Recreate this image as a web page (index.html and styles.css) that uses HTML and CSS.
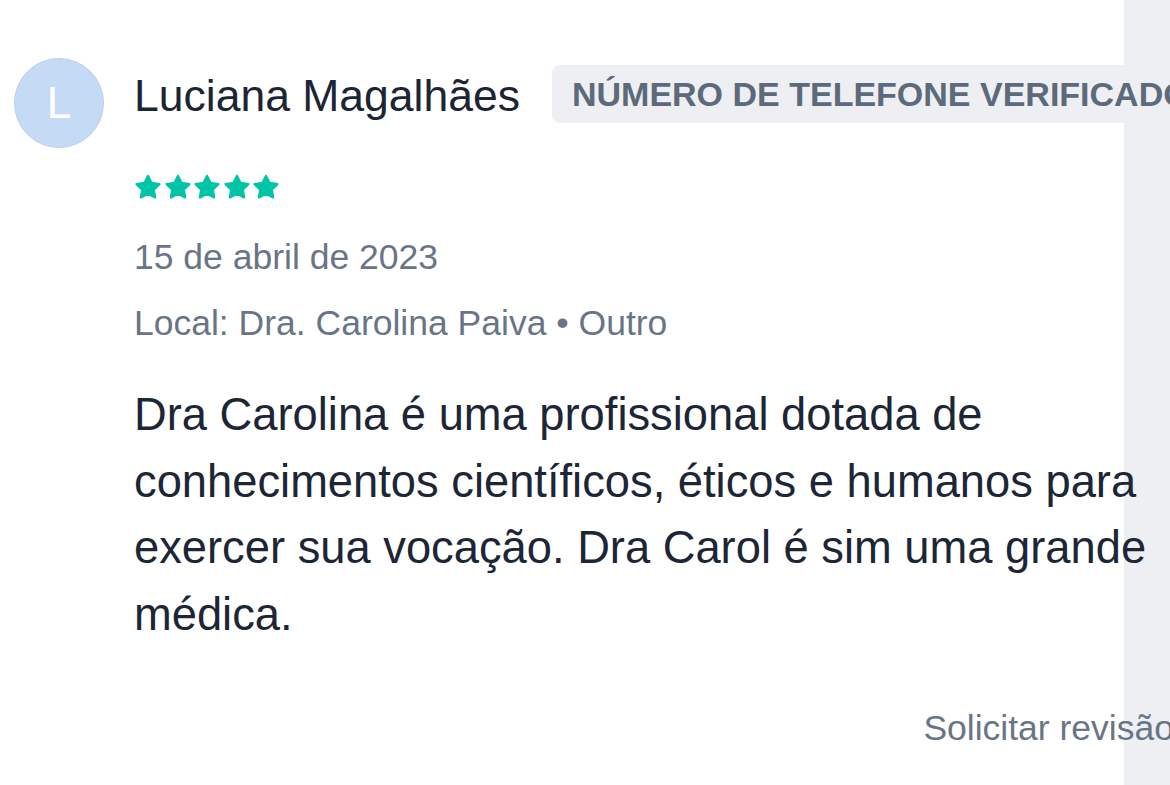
FILE: index.html
```html
<!DOCTYPE html>
<html lang="pt-BR">
<head>
    <meta charset="UTF-8">
    <meta name="viewport" content="width=device-width, initial-scale=1.0">
    <title>Opinião - Luciana Magalhães</title>
    <link rel="stylesheet" href="styles.css">
</head>
<body>
    <div class="review">
        <div class="review__avatar">L</div>
        <div class="review__content">
            <div class="review__head">
                <span class="review__name">Luciana Magalhães</span>
                <span class="review__badge">NÚMERO DE TELEFONE VERIFICADO</span>
            </div>
            <div class="review__stars">
                <svg class="star" viewBox="0 0 24 24"><polygon points="12,2.5 15.09,8.56 21.8,9.5 16.9,14.2 18.1,20.9 12,17.7 5.9,20.9 7.1,14.2 2.2,9.5 8.91,8.56"/></svg>
                <svg class="star" viewBox="0 0 24 24"><polygon points="12,2.5 15.09,8.56 21.8,9.5 16.9,14.2 18.1,20.9 12,17.7 5.9,20.9 7.1,14.2 2.2,9.5 8.91,8.56"/></svg>
                <svg class="star" viewBox="0 0 24 24"><polygon points="12,2.5 15.09,8.56 21.8,9.5 16.9,14.2 18.1,20.9 12,17.7 5.9,20.9 7.1,14.2 2.2,9.5 8.91,8.56"/></svg>
                <svg class="star" viewBox="0 0 24 24"><polygon points="12,2.5 15.09,8.56 21.8,9.5 16.9,14.2 18.1,20.9 12,17.7 5.9,20.9 7.1,14.2 2.2,9.5 8.91,8.56"/></svg>
                <svg class="star" viewBox="0 0 24 24"><polygon points="12,2.5 15.09,8.56 21.8,9.5 16.9,14.2 18.1,20.9 12,17.7 5.9,20.9 7.1,14.2 2.2,9.5 8.91,8.56"/></svg>
            </div>
            <div class="review__meta review__meta--date">15 de abril de 2023</div>
            <div class="review__meta">Local: Dra. Carolina Paiva • Outro</div>
            <p class="review__text">Dra Carolina é uma profissional dotada de conhecimentos científicos, éticos e humanos para exercer sua vocação. Dra Carol é sim uma grande médica.</p>
            <div class="review__actions">
                <a class="review__link">Solicitar revisão</a>
            </div>
        </div>
    </div>
</body>
</html>
```

FILE: styles.css
```css
body {
    margin: 0;
    padding: 0;
    width: 100%;
    height: 100vh;
    overflow: hidden;
    font-family: "Liberation Sans", Arial, sans-serif;
    background: linear-gradient(to right, #ffffff 1124px, #eeeff3 1124px);
}
.review {
    display: flex;
    flex-direction: row;
    align-items: flex-start;
    width: 1160px;
    padding-top: 58px;
    padding-left: 14px;
}
.review__avatar {
    flex: none;
    width: 88px;
    height: 88px;
    border: 1px solid #b9cfec;
    border-radius: 50%;
    background: #c5dbf5;
    color: #ffffff;
    font-size: 44px;
    line-height: 88px;
    text-align: center;
    font-weight: 300;
}
.review__content {
    flex: 1;
    min-width: 0;
    margin-left: 30px;
    padding-top: 7px;
}
.review__head {
    display: flex;
    flex-direction: row;
    align-items: center;
    white-space: nowrap;
}
.review__name {
    font-size: 44.5px;
    color: #1c2533;
    margin-right: 32px;
    padding-top: 4px;
}
.review__badge {
    flex: none;
    background: #eeeff3;
    border-radius: 8px;
    padding: 9px 20px;
    line-height: 40px;
    font-size: 34px;
    font-weight: bold;
    color: #5d6a7b;
}
.review__stars {
    display: flex;
    flex-direction: row;
    gap: 1.6px;
    margin-top: 50px;
}
.star {
    width: 28px;
    height: 28px;
    fill: #00c4a6;
    stroke: #00c4a6;
    stroke-width: 2;
    stroke-linejoin: round;
}
.review__meta {
    font-size: 35.5px;
    line-height: 66px;
    color: #697586;
}
.review__meta--date {
    margin-top: 23px;
}
.review__text {
    margin: 26px 0 0 0;
    font-size: 45.3px;
    line-height: 66.5px;
    color: #1c2636;
}
.review__actions {
    margin-top: 55px;
    text-align: right;
}
.review__link {
    font-size: 35.5px;
    line-height: 50px;
    color: #697586;
    white-space: nowrap;
}
```
